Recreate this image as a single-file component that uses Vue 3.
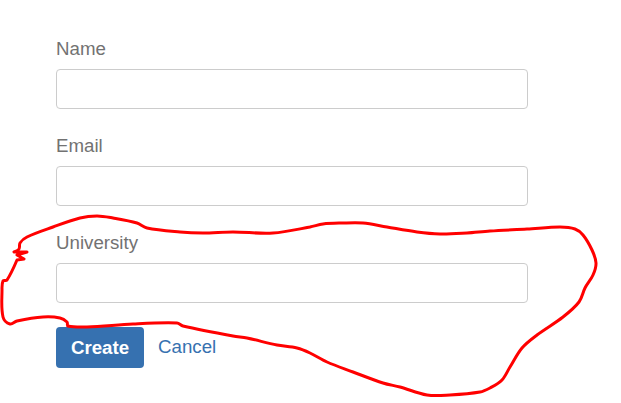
<template>
  <div class="page">
    <form class="form" @submit.prevent>
      <div v-for="field in fields" :key="field" class="form-group">
        <label class="label">{{ field }}</label>
        <input class="input" type="text" />
      </div>
      <div class="actions">
        <button class="btn" type="submit">Create</button>
        <a class="cancel" href="#">Cancel</a>
      </div>
    </form>

    <!-- hand-drawn annotation on top of the form -->
    <svg class="scribble" width="621" height="403" viewBox="0 0 621 403">
      <path :d="scribblePath" fill="none" stroke="#ff0000" stroke-width="3" stroke-linecap="round" stroke-linejoin="round" />
    </svg>
  </div>
</template>

<script setup>
import { computed } from 'vue'

const fields = ['Name', 'Email', 'University']

const points = [
  [310, 227], [273, 233], [233, 232], [203, 233], [180, 232], [147, 228], [137, 223],
  [113, 218], [97, 216], [80, 218], [53, 227], [27, 237], [20, 243], [19, 249],
  [14, 252], [27, 252], [17, 255], [24, 259], [17, 260], [7, 280], [3, 281], [2, 290],
  [3, 317], [10, 324], [17, 321], [43, 317], [60, 318], [67, 322], [68, 326], [87, 327],
  [133, 324], [177, 323], [183, 326], [233, 336], [247, 338], [277, 345], [297, 348],
  [310, 353], [327, 362], [353, 372], [383, 383], [400, 387], [427, 395], [450, 395],
  [480, 392], [490, 388], [502, 380], [510, 367], [522, 348], [537, 335], [563, 317],
  [579, 302], [585, 288], [593, 275], [596, 263], [592, 250], [583, 235], [575, 229],
  [560, 227], [527, 229], [490, 231], [467, 233], [440, 234], [417, 232], [387, 227],
  [363, 223], [343, 223], [323, 224], [310, 227],
]

// the zigzag on the left edge stays sharp, no smoothing there
const corners = new Set([14, 15, 16, 17, 18])

// smooth curve through the traced points, handles scaled to each segment's length
const scribblePath = computed(() => {
  const n = points.length - 1
  const at = (i) => points[(i + n) % n]
  const handle = (i, len) => {
    if (corners.has((i + n) % n)) return [0, 0]
    const dx = at(i + 1)[0] - at(i - 1)[0]
    const dy = at(i + 1)[1] - at(i - 1)[1]
    const size = Math.hypot(dx, dy) || 1
    return [(dx / size) * len / 3, (dy / size) * len / 3]
  }
  let d = `M${points[0][0]} ${points[0][1]}`
  for (let i = 0; i < n; i++) {
    const p1 = at(i)
    const p2 = at(i + 1)
    const len = Math.hypot(p2[0] - p1[0], p2[1] - p1[1])
    const h1 = handle(i, len)
    const h2 = handle(i + 1, len)
    d += ` C${(p1[0] + h1[0]).toFixed(1)} ${(p1[1] + h1[1]).toFixed(1)} ${(p2[0] - h2[0]).toFixed(1)} ${(p2[1] - h2[1]).toFixed(1)} ${p2[0]} ${p2[1]}`
  }
  return d
})
</script>

<style scoped>
.page {
  position: relative;
  width: 621px;
  height: 403px;
  overflow: hidden;
  background: #fff;
  font-family: "Liberation Sans", Arial, sans-serif;
}

.form {
  width: 472px;
  padding: 36px 0 0 56px;
}

.form-group {
  margin-bottom: 24px;
}

.label {
  display: block;
  height: 26px;
  margin-bottom: 7px;
  font-size: 18.7px;
  line-height: 26px;
  color: #727272;
}

.input {
  display: block;
  box-sizing: border-box;
  width: 100%;
  height: 40px;
  border: 1px solid #ccc;
  border-radius: 4px;
  background: #fff;
}

.actions {
  display: flex;
  align-items: center;
  gap: 14px;
}

.btn {
  width: 88px;
  height: 41px;
  padding: 0;
  border: none;
  border-radius: 4px;
  background: #3671b0;
  color: #fff;
  font-family: inherit;
  font-size: 18.7px;
  font-weight: bold;
}

.cancel {
  margin-bottom: 2px;
  font-size: 18.7px;
  color: #3671b0;
  text-decoration: none;
}

.scribble {
  position: absolute;
  top: 0;
  left: 0;
  pointer-events: none;
}
</style>
